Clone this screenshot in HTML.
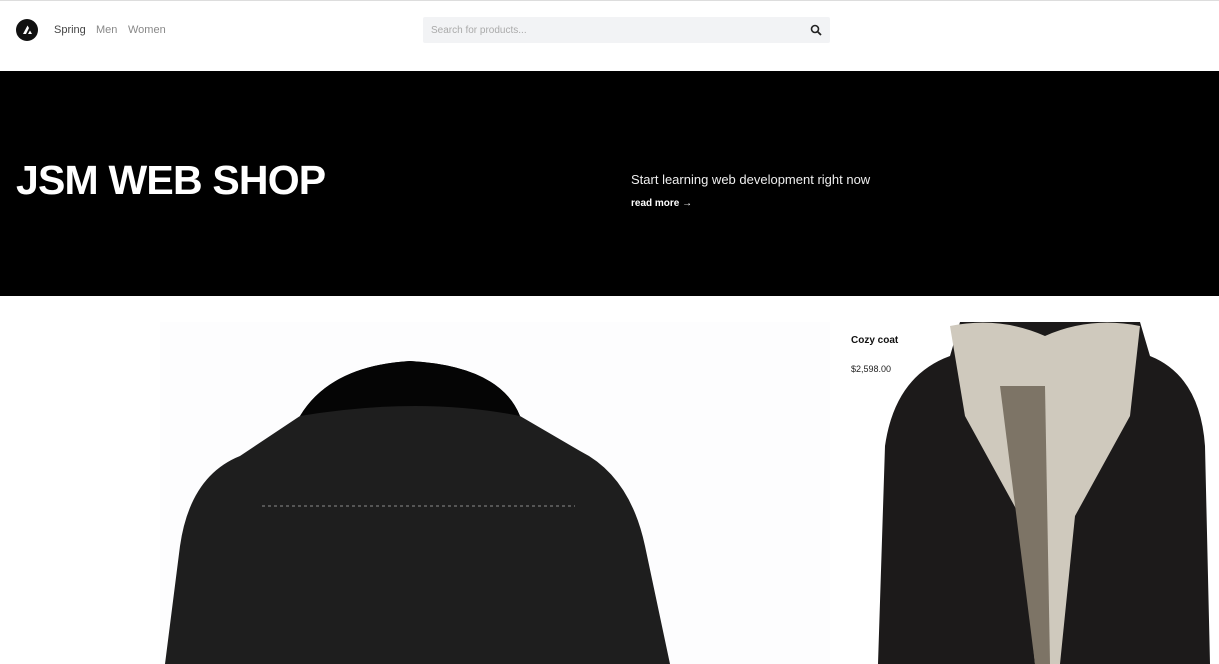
<!DOCTYPE html>
<html><head><style>
*{margin:0;padding:0;box-sizing:border-box}
body{width:1219px;height:664px;overflow:hidden;background:#fff;font-family:"Liberation Sans",sans-serif;position:relative}
.top{position:absolute;top:0;left:0;width:1219px;height:1px;background:#ddd}
.logo{position:absolute;left:16px;top:19px;width:22px;height:22px;border-radius:50%;background:#111}
.nav{position:absolute;top:24px;font-size:11px;color:#888}
.search{position:absolute;left:423px;top:17px;width:407px;height:26px;background:#f2f3f5;border-radius:2px}
.search span{position:absolute;left:8px;top:8px;font-size:10px;color:#aaa}
.hero{position:absolute;left:0;top:71px;width:1219px;height:225px;background:#000}
.hero h1{position:absolute;left:16px;top:86px;font-size:41px;font-weight:900;color:#fff;letter-spacing:-0.8px}
.hero p{position:absolute;left:631px;top:101px;font-size:13px;color:#eee}
.hero b{position:absolute;left:631px;top:127px;font-size:10px;color:#fff}
</style></head><body>
<div class="top"></div>
<div class="logo"><svg width="22" height="22"><path d="M7 15 L11.5 6.5 L13 9 L10 15Z M12 15 L14 11.5 L16 15Z" fill="#fff"/></svg></div>
<div class="nav" style="left:54px;color:#444">Spring</div>
<div class="nav" style="left:96px">Men</div>
<div class="nav" style="left:128px">Women</div>
<div class="search"><span>Search for products...</span>
<svg style="position:absolute;left:387px;top:7px" width="12" height="12"><circle cx="5" cy="5" r="3.5" stroke="#222" stroke-width="1.6" fill="none"/><path d="M7.5 7.5L11 11" stroke="#222" stroke-width="1.8"/></svg></div>
<div class="hero"><h1>JSM WEB SHOP</h1><p>Start learning web development right now</p><b>read more →</b></div>
<svg style="position:absolute;left:0;top:296px" width="1219" height="368">
<rect x="160" y="26" width="670" height="342" fill="#fdfdfe"/>
<path d="M165 368 L180 250 Q190 180 240 160 L300 120 Q330 70 410 65 Q500 70 520 120 L580 155 Q630 180 645 250 L670 368Z" fill="#1e1e1e"/>
<path d="M300 120 Q330 70 410 65 Q500 70 520 120 Q420 100 300 120Z" fill="#050505"/>
<path d="M262 210 L575 210" stroke="#555" stroke-width="2" stroke-dasharray="3 3"/>
<path d="M878 368 L885 150 Q895 80 950 60 L960 26 L1140 26 L1150 60 Q1200 80 1205 150 L1210 368Z" fill="#1c1a1a"/>
<path d="M950 30 Q1000 20 1045 40 Q1090 20 1140 30 L1130 120 L1075 220 L1060 368 L1035 368 L1020 220 L965 120Z" fill="#cfc9bd"/>
<path d="M1000 90 L1045 90 L1050 368 L1035 368 Z" fill="#7d7466"/>
<text x="851" y="47" font-size="10" font-weight="bold" fill="#111" font-family="Liberation Sans">Cozy coat</text>
<text x="851" y="76" font-size="9" fill="#222" font-family="Liberation Sans">$2,598.00</text>
</svg>
</body></html>
